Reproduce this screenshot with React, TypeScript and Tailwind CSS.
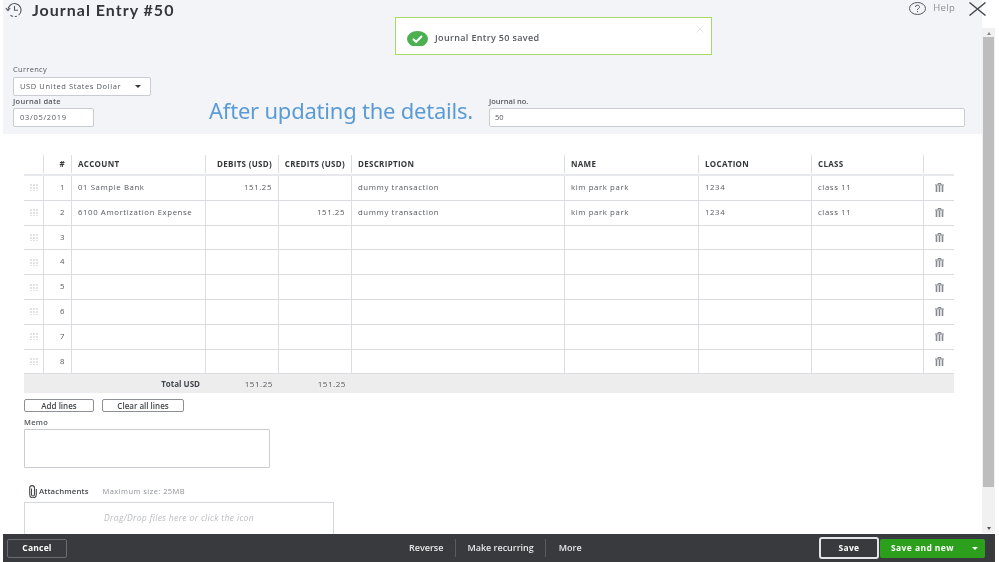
import React from "react";

const cols = "grid-cols-[20px_28px_134px_73px_73px_213px_134px_113px_112px_30px]";

const rows = [
  { n: 1, account: "01 Sample Bank", debit: "151.25", credit: "", desc: "dummy transaction", name: "kim park park", loc: "1234", cls: "class 11" },
  { n: 2, account: "6100 Amortization Expense", debit: "", credit: "151.25", desc: "dummy transaction", name: "kim park park", loc: "1234", cls: "class 11" },
  ...[3, 4, 5, 6, 7, 8].map((n) => ({ n, account: "", debit: "", credit: "", desc: "", name: "", loc: "", cls: "" })),
];

function Grip() {
  return (
    <svg width="8" height="7" viewBox="0 0 8 7" className="text-[#8d9096]">
      {[0.5, 3.5, 6.5].map((x) =>
        [0.5, 3.5, 6.5].map((y) => <rect key={`${x}-${y}`} x={x} y={y} width="1" height="1" fill="currentColor" />)
      )}
    </svg>
  );
}

function Trash() {
  return (
    <svg width="9" height="9" viewBox="0 0 9 9" className="text-[#85888d]">
      <path d="M0 2H9M3 2V0.5H6V2" fill="none" stroke="currentColor" strokeWidth="1" />
      <path d="M1.500 2.500V9M4.500 2.500V9M7.500 2.500V9" fill="none" stroke="currentColor" strokeWidth="1.600" />
    </svg>
  );
}

function Cell({ children, right }: { children?: React.ReactNode; right?: boolean }) {
  return (
    <div className={`flex items-center min-w-0 whitespace-nowrap border-r border-[#dcdee2] ${right ? "justify-end pr-[6px]" : "pl-[6px]"}`}>
      {children}
    </div>
  );
}

export default function App() {
  return (
    <div className="relative flex flex-col w-[999px] h-[562px] overflow-hidden bg-white pl-[3px] font-['Open_Sans',sans-serif] text-[#55585d] blur-[0.4px]">
      <div className="flex flex-1 min-h-0 flex-col">
        <div className="relative h-[134px] shrink-0 mr-[17px] bg-[#f3f4f8] pl-[10px]">
          <div className="absolute left-[2px] top-[1px] flex items-center gap-[9px]">
            <svg width="18" height="15" viewBox="0 0 18 15" fill="none" stroke="#55585d" strokeWidth="1.100">
              <path d="M3 8a6.500 6.500 0 1 1 2.500 5.200" strokeDasharray="26 2 2 2" />
              <path d="M0.800 6l2.200 2.600L5.200 6" />
              <path d="M9.500 4v4.200h3.500" />
            </svg>
            <span className="font-['Lato',sans-serif] text-[16px] leading-[17px] font-bold tracking-[1px] text-[#33363a]">Journal Entry #50</span>
          </div>

          <div className="pt-[63px] flex flex-col">
            <label className="text-[7.5px] leading-[12px] tracking-[0.3px] mb-[2px]">Currency</label>
            <div className="flex items-center justify-between w-[138px] h-[19px] bg-white border border-[#c9ccd1] rounded-[2px] pl-[6px] pr-[9px] text-[7.5px] tracking-[0.6px]">
              <span>USD United States Dollar</span>
              <span className="w-0 h-0 border-x-[3px] border-x-transparent border-t-[3px] border-t-[#33363a]" />
            </div>
          </div>
          <div className="flex">
            <div className="flex flex-col w-[196px]">
              <label className="text-[7.5px] leading-[11px] tracking-[0.3px] font-semibold">Journal date</label>
              <div className="flex items-center mt-[1px] w-[81px] h-[19px] bg-white border border-[#c9ccd1] rounded-[2px] pl-[6px] text-[7.5px] tracking-[0.7px]">03/05/2019</div>
            </div>
            <div className="w-[280px] -mt-[1px] text-[22px] leading-[30px] text-[#5b9bd5] font-['Noto_Sans',sans-serif] whitespace-nowrap tracking-[-0.22px]">After updating the details.</div>
            <div className="flex flex-col flex-1 mr-[17px]">
              <label className="text-[7.5px] leading-[11px] font-semibold">Journal no.</label>
              <div className="flex items-center mt-[1px] h-[19px] bg-white border border-[#c9ccd1] rounded-[2px] pl-[5px] text-[7.5px]">50</div>
            </div>
          </div>
        </div>

        <div className="flex-1 min-h-0 pl-[21px] pr-[45px] pt-[21px]">
          <div className={`grid ${cols} h-[21px] pb-[1px] text-[8px] font-bold tracking-[0.3px] text-[#33363a] border-b-2 border-[#e6e8ec]`}>
            <Cell />
            <Cell right>#</Cell>
            <Cell>ACCOUNT</Cell>
            <Cell right>DEBITS (USD)</Cell>
            <Cell right>CREDITS (USD)</Cell>
            <Cell>DESCRIPTION</Cell>
            <Cell>NAME</Cell>
            <Cell>LOCATION</Cell>
            <Cell>CLASS</Cell>
            <div />
          </div>
          {rows.map((r) => (
            <div key={r.n} className={`grid ${cols} h-[24.8px] text-[7.8px] tracking-[0.6px] border-b border-[#d9dbdf]`}>
              <div className="flex items-center justify-center border-r border-[#dcdee2]"><Grip /></div>
              <Cell right>{r.n}</Cell>
              <Cell>{r.account}</Cell>
              <Cell right>{r.debit}</Cell>
              <Cell right>{r.credit}</Cell>
              <Cell>{r.desc}</Cell>
              <Cell>{r.name}</Cell>
              <Cell>{r.loc}</Cell>
              <Cell>{r.cls}</Cell>
              <div className="flex items-center justify-center"><Trash /></div>
            </div>
          ))}
          <div className={`grid ${cols} h-[19px] bg-[#ededee] text-[8px] items-center`}>
            <div className="col-span-3 text-right pr-[6px] font-bold text-[#44474b]">Total USD</div>
            <div className="text-right pr-[6px] tracking-[0.55px]">151.25</div>
            <div className="text-right pr-[6px] tracking-[0.55px]">151.25</div>
          </div>
          <div className="flex gap-[8px] mt-[6px]">
            <button className="w-[70px] h-[13px] border border-[#8d9096] rounded-[2px] flex items-center justify-center text-[8px] font-semibold text-[#44474b]">Add lines</button>
            <button className="w-[82px] h-[13px] border border-[#8d9096] rounded-[2px] flex items-center justify-center text-[8px] font-semibold text-[#44474b]">Clear all lines</button>
          </div>
          <div className="mt-[5px] text-[7.5px] leading-[11px] font-semibold tracking-[0.3px]">Memo</div>
          <div className="mt-[1px] w-[246px] h-[39px] border border-[#c9ccd1] rounded-[1px]" />
          <div className="flex items-center mt-[16px] h-[14px] pl-[4px]">
            <svg width="10" height="13" viewBox="0 0 10 13" fill="none" stroke="#44474b" strokeWidth="1.100">
              <path d="M3.500 3.500v6a1.500 1.500 0 0 0 3 0V3a2.400 2.400 0 0 0-4.800 0v6.500a3.300 3.300 0 0 0 6.600 0V4" />
            </svg>
            <span className="ml-[1px] text-[7.8px] font-semibold tracking-[0.1px] text-[#44474b]">Attachments</span>
            <span className="ml-[14px] text-[7.5px] tracking-[0.45px] text-[#8d9096]">Maximum size: 25MB</span>
          </div>
          <div className="mt-[4px] w-[310px] h-[41px] border border-[#d4d7db] pt-[9px] text-center text-[8.5px] italic tracking-[0.35px] text-[#b9bcc0]">
            Drag/Drop files here or click the icon
          </div>
        </div>

        <div className="relative z-10 flex h-[28px] shrink-0 items-center mr-[4px] bg-[#393a3d] pl-[4px] pr-[10px] text-white">
          <button className="w-[60px] h-[19px] border border-[#6b6c72] rounded-[2px] text-[8.5px] font-bold tracking-[0.2px]">Cancel</button>
          <div className="flex flex-1 items-center text-[9px] font-semibold text-[#e8e8ea] pl-[342px]">
            <span className="pr-[12px] border-r border-[#5a5b60] leading-[18px]">Reverse</span>
            <span className="px-[11px] border-r border-[#5a5b60] leading-[18px]">Make recurring</span>
            <span className="pl-[13px]">More</span>
          </div>
          <button className="w-[60px] h-[22px] border-2 border-[#e4e4e6] rounded-[3px] text-[8.5px] font-bold tracking-[0.3px]">Save</button>
          <div className="flex items-center ml-[1px] w-[105px] h-[19px] bg-[#2ca01c] rounded-[2px] text-[8.5px] font-bold tracking-[0.4px]">
            <span className="pl-[11px] flex-1">Save and new</span>
            <span className="mr-[7px] w-0 h-0 border-x-[3.5px] border-x-transparent border-t-[3.5px] border-t-white" />
          </div>
        </div>
      </div>

      {/* scrollbar */}
      <div className="absolute right-[4px] top-[28px] bottom-[29px] w-[13px] bg-[#f1f1f1] flex flex-col items-center">
        <span className="mt-[4px] w-0 h-0 border-x-[2.500px] border-x-transparent border-b-[3px] border-b-[#8a8a8a]" />
        <div className="mt-[2px] h-[450px] w-[11px] bg-[#bdbdbd]" />
        <span className="mt-auto mb-[3px] w-0 h-0 border-x-[2.500px] border-x-transparent border-t-[3px] border-t-[#555]" />
      </div>

      {/* help + close */}
      <div className="absolute right-[13px] top-0 flex items-center h-[17px]">
        <svg width="17" height="13" viewBox="0 0 17 13" fill="none" stroke="#55585d" strokeWidth="1">
          <ellipse cx="8.500" cy="6.500" rx="8" ry="6" />
          <path d="M6.500 5a2 1.800 0 1 1 3 1.500c-.7.400-1 .7-1 1.500" />
          <path d="M8.500 9v1.200" />
        </svg>
        <span className="ml-[7px] text-[9.5px] tracking-[0.3px] text-[#8d9096]">Help</span>
        <svg width="17" height="14" viewBox="0 0 17 14" className="ml-[14px]" fill="none" stroke="#44474b" strokeWidth="1.400">
          <path d="M0.500 0.500L16.500 13.500M16.500 0.500L0.500 13.500" />
        </svg>
      </div>

      {/* toast */}
      <div className="absolute left-[395px] top-[17px] flex w-[317px] h-[38px] items-center bg-white border border-[#a5d867] pl-[11px] pt-[4px]">
        <svg width="21" height="15" viewBox="0 0 21 15">
          <ellipse cx="10.500" cy="8" rx="10.500" ry="8" fill="#4caf50" />
          <path d="M6 8l3.200 2.800L15 5" fill="none" stroke="#fff" strokeWidth="2" />
        </svg>
        <span className="ml-[7px] text-[9px] font-semibold tracking-[0.35px] text-[#55585d]">Journal Entry 50 saved</span>
        <svg width="8" height="8" viewBox="0 0 8 8" className="absolute right-[7px] top-[7px]" fill="none" stroke="#e4e6ea" strokeWidth="1">
          <path d="M0.500 0.500L7.500 7.500M7.500 0.500L0.500 7.500" />
        </svg>
      </div>
    </div>
  );
}
